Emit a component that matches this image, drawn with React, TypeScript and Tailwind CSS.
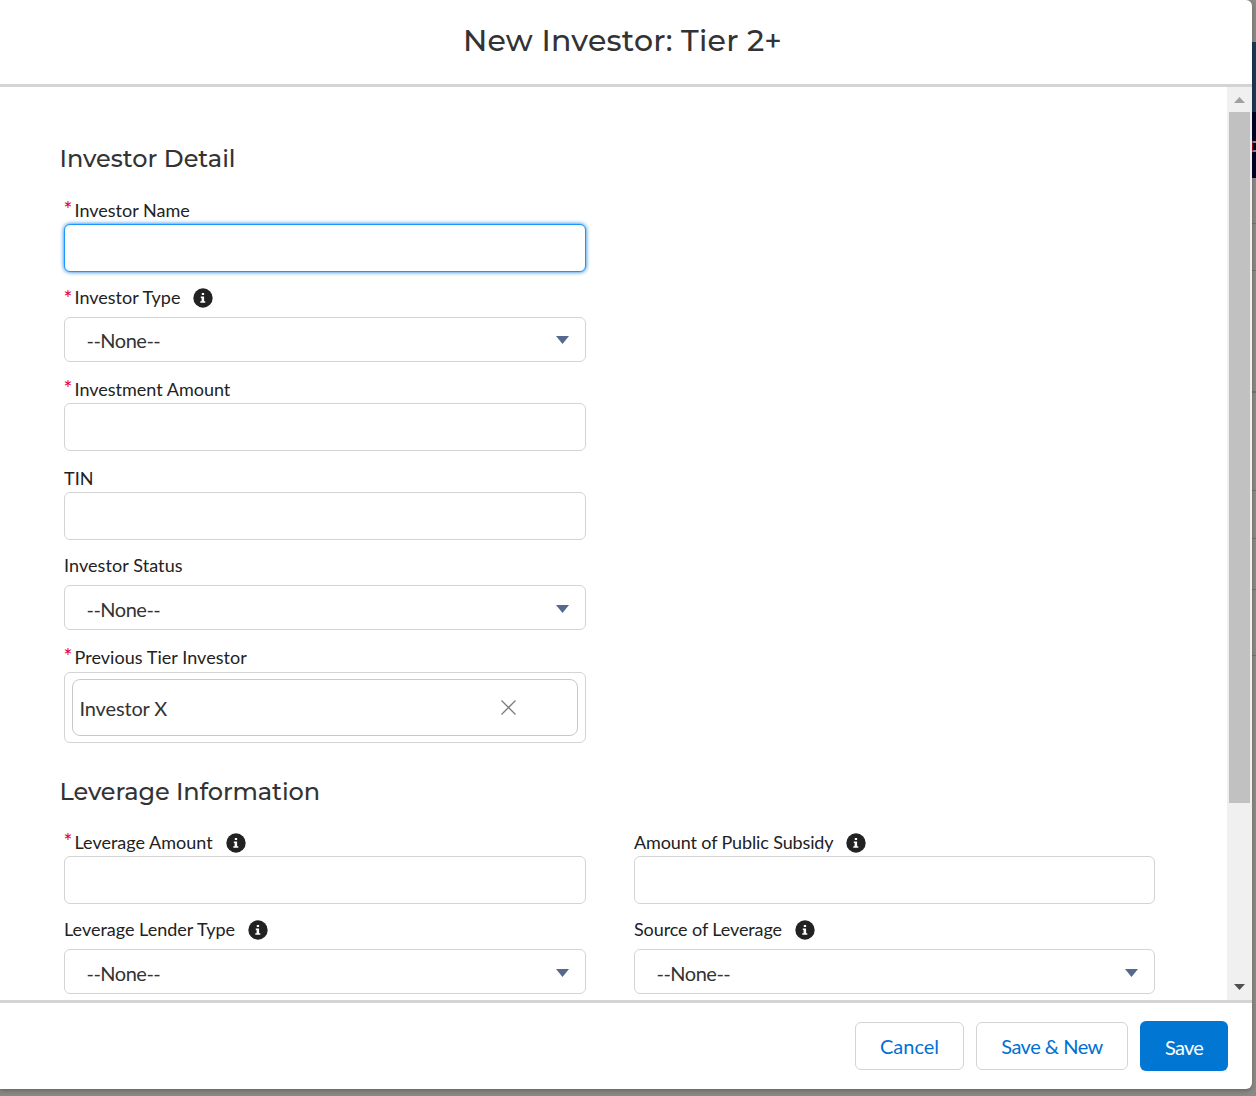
import { useState } from "react";
import type { ReactNode } from "react";

interface FieldProps {
  label: string;
  required?: boolean;
  info?: boolean;
  select?: boolean;
  labelClass?: string;
  children: ReactNode;
}

function InfoIcon() {
  return (
    <svg className="mt-px ml-[13px] h-5 w-5" viewBox="0 0 20 20">
      <circle cx="10" cy="10" r="9.7" fill="#222" />
      <path d="M8.8 5h2.3v2.1H8.8zM7.8 8.4h3.3v4.8h1.2v1.5H7.3v-1.5h1.3V9.9h-.8z" fill="#fff" />
    </svg>
  );
}

function Field({ label, required, info, select, labelClass = "", children }: FieldProps) {
  return (
    <div className={select ? "pt-[11px]" : "pt-[13px]"}>
      <div className={`flex h-7 items-center text-[18px] leading-7 whitespace-nowrap text-[#222] ${select ? "mb-1.5" : ""}`}>
        {required && (
          <span className={`-ml-[0.5px] w-[11px] shrink-0 text-[21px] text-[#e4002b] ${select ? "pt-px" : "pb-[3px]"}`}>*</span>
        )}
        <span className={labelClass}>{label}</span>
        {info && <InfoIcon />}
      </div>
      {children}
    </div>
  );
}

function TextInput({ focused }: { focused?: boolean }) {
  const [value, setValue] = useState("");
  return (
    <input
      value={value}
      onChange={(e) => setValue(e.target.value)}
      className={`block h-12 w-full rounded-md border bg-white px-4 text-xl outline-none ${
        focused ? "border-[#1b96ff] shadow-[0_0_4px_0_#0176d3]" : "border-[#d4d4d4]"
      }`}
    />
  );
}

function Select({ className = "pt-[2px]" }: { className?: string }) {
  return (
    <button
      className={`flex h-[45px] w-full items-center justify-between rounded-md border border-[#d4d4d4] bg-white pr-4 pl-[21.5px] text-xl tracking-[-0.5px] text-[#333] ${className}`}
    >
      <span>--None--</span>
      <svg className="mt-px h-2 w-[13px]" viewBox="0 0 13 8" fill="#54698d">
        <path d="M0 0h13L6.5 8z" />
      </svg>
    </button>
  );
}

function Scrollbar() {
  return (
    <div className="flex w-[25px] shrink-0 flex-col items-center bg-[#f0f0f0]">
      <div className="flex h-[25px] items-center">
        <svg width="11" height="6" viewBox="0 0 11 6" fill="#a0a0a0">
          <path d="M5.5 0L11 6H0z" />
        </svg>
      </div>
      <div className="h-[691px] w-[21px] bg-[#c1c1c1]" />
      <div className="mt-auto flex h-[25px] items-center pb-[2px]">
        <svg width="11" height="6" viewBox="0 0 11 6" fill="#505050">
          <path d="M0 0h11L5.5 6z" />
        </svg>
      </div>
    </div>
  );
}

function Backdrop() {
  return (
    <div className="absolute inset-y-0 right-0 flex w-2 flex-col">
      <div className="h-[42px]" />
      <div className="h-[70px] bg-[#1b3954]" />
      <div className="h-[66px] bg-[#000028] pt-[29px] pl-1">
        <div className="h-[11px] border-y-2 border-l border-y-[#8a8a8a] border-l-[#a00020]" />
      </div>
      <div className="h-[46px] border-b border-[#747371]" />
      <div className="h-[47px] border-b border-[#747371]" />
      <div className="h-[122px] border-b-2 border-[#747371]" />
      <div className="h-[98px] border-b border-[#747371]" />
      <div className="h-12 border-b border-[#747371]" />
      <div className="h-[51px] border-b border-[#747371]" />
      <div className="h-[66px] border-b border-[#747371]" />
    </div>
  );
}

const heading = "pl-[59.5px] font-[Montserrat,Inter,sans-serif] text-[24px] leading-8 font-medium text-[#333]";

export default function App() {
  return (
    <div className="relative h-[1096px] w-[1256px] overflow-hidden bg-[#8a8987] font-[Lato,sans-serif]">
      <Backdrop />
      <div className="relative flex h-[1089px] w-[1252px] flex-col overflow-hidden rounded-r-md bg-white shadow-[0_2px_4px_rgba(0,0,0,0.25)]">
        <header className="flex h-[87px] shrink-0 items-center justify-center border-b-3 border-[#d4d4d4] pr-[7px] pb-[3px]">
          <h1 className="font-[Montserrat,Inter,sans-serif] text-[30px] font-medium tracking-[0.25px] text-[#333]">
            New Investor: Tier 2+
          </h1>
        </header>

        <div className="flex h-[913px] shrink-0">
          <div className="flex-1 overflow-hidden pt-[56px]">
            <h2 className={heading}>Investor Detail</h2>
            <div className="mt-[8px] ml-16 w-[522px]">
              <Field label="Investor Name" required>
                <TextInput focused />
              </Field>
              <Field label="Investor Type" required info select>
                <Select className="" />
              </Field>
              <Field label="Investment Amount" required>
                <TextInput />
              </Field>
              <Field label="TIN">
                <TextInput />
              </Field>
              <Field label="Investor Status" select labelClass="tracking-[0.08px]">
                <Select />
              </Field>
              <Field label="Previous Tier Investor" required labelClass="tracking-[0.05px]">
                <div className="mt-px h-[71px] rounded-md border border-[#d4d4d4] px-[7px] py-[6px]">
                  <div className="flex h-[57px] items-center justify-between rounded-lg border border-[#c9c9c9] pr-[61px] pl-[6.5px] text-xl text-[#333]">
                    <span className="pt-px tracking-[-0.15px]">Investor X</span>
                    <button aria-label="Remove">
                      <svg className="mb-px h-[15px] w-[15px]" viewBox="0 0 15 15" stroke="#7d7d7d" strokeWidth="1.3">
                        <path d="M.5.5l14 14M14.5.5l-14 14" />
                      </svg>
                    </button>
                  </div>
                </div>
              </Field>
            </div>

            <h2 className={`${heading} mt-[33px] tracking-[-0.08px]`}>Leverage Information</h2>
            <div className="mt-[7px] ml-16 grid w-[1091px] grid-cols-[522px_521px] gap-x-12">
              <Field label="Leverage Amount" required info>
                <TextInput />
              </Field>
              <Field label="Amount of Public Subsidy" info labelClass="tracking-[-0.13px]">
                <TextInput />
              </Field>
              <Field label="Leverage Lender Type" info select>
                <Select />
              </Field>
              <Field label="Source of Leverage" info select labelClass="tracking-[-0.1px]">
                <Select />
              </Field>
            </div>
          </div>
          <Scrollbar />
        </div>

        <footer className="flex h-[89px] shrink-0 items-center justify-end gap-3 border-t-3 border-[#d4d4d4] pr-6 text-xl text-[#0070d2]">
          <button className="h-12 w-[109px] rounded-md border border-[#d4d4d4] bg-white pb-px">Cancel</button>
          <button className="h-12 w-[152px] rounded-md border border-[#d4d4d4] bg-white pb-px tracking-[-0.5px]">
            Save &amp; New
          </button>
          <button className="h-[50px] w-[88px] rounded-md bg-[#0176d3] pt-px tracking-[-0.8px] text-white">Save</button>
        </footer>
      </div>
    </div>
  );
}
